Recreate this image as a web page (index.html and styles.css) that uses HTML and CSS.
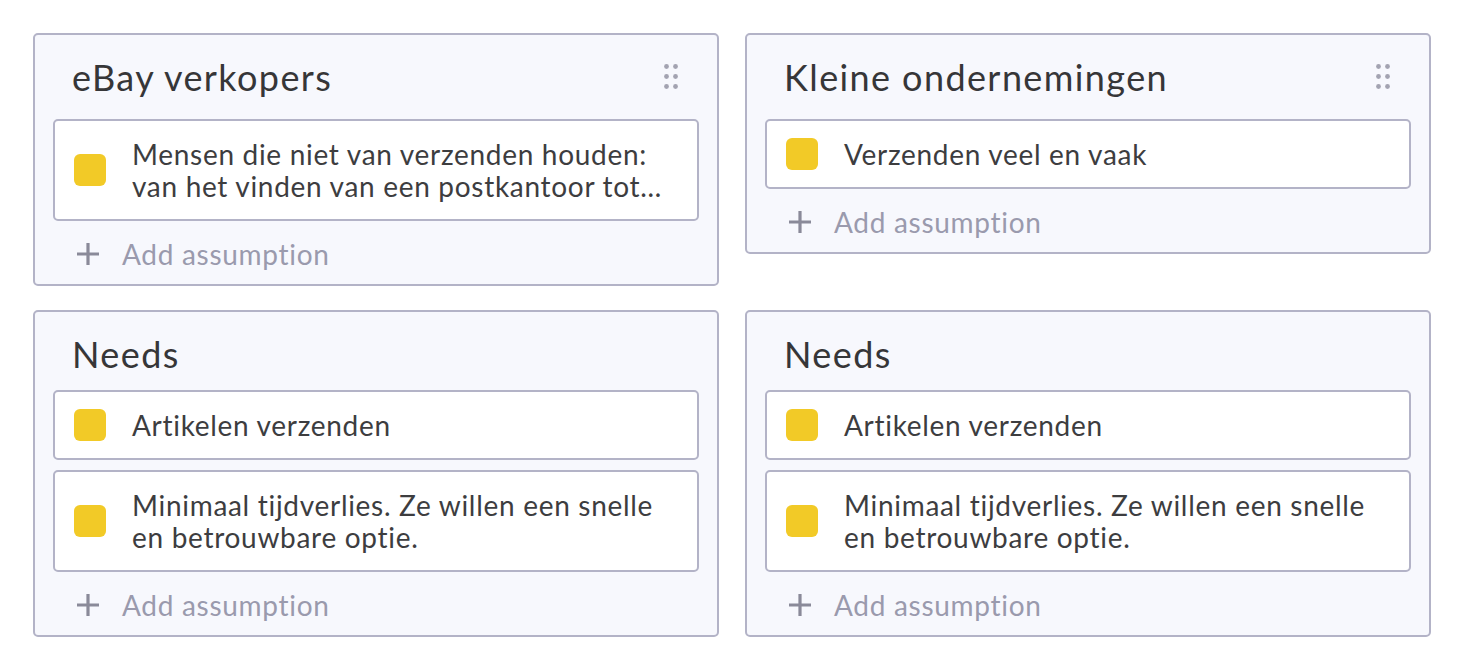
FILE: index.html
```html
<!DOCTYPE html>
<html lang="nl">
<head>
<meta charset="utf-8">
<title>Assumptions</title>
<link rel="stylesheet" href="styles.css">
</head>
<body>
<main class="board">
  <section class="card">
    <header class="card-head has-handle">
      <h2 class="card-title">eBay verkopers</h2>
      <span class="handle" aria-hidden="true">
        <svg width="15" height="25" viewBox="0 0 15 25"><g fill="#a3a3b1"><circle cx="2.5" cy="2.5" r="2.4"/><circle cx="11.5" cy="2.5" r="2.4"/><circle cx="2.5" cy="12.5" r="2.4"/><circle cx="11.5" cy="12.5" r="2.4"/><circle cx="2.5" cy="22.5" r="2.4"/><circle cx="11.5" cy="22.5" r="2.4"/></g></svg>
      </span>
    </header>
    <div class="items">
      <div class="item"><span class="swatch"></span><p class="item-text item-text--clamped">Mensen die niet van verzenden houden: van het vinden van een postkantoor tot…</p></div>
    </div>
    <button class="add"><svg class="plus" width="24" height="24" viewBox="0 0 24 24"><path d="M12 1V23M1 12H23" stroke="#8a8a99" stroke-width="3.2"/></svg><span>Add assumption</span></button>
  </section>

  <section class="card">
    <header class="card-head has-handle">
      <h2 class="card-title">Kleine ondernemingen</h2>
      <span class="handle" aria-hidden="true">
        <svg width="15" height="25" viewBox="0 0 15 25"><g fill="#a3a3b1"><circle cx="2.5" cy="2.5" r="2.4"/><circle cx="11.5" cy="2.5" r="2.4"/><circle cx="2.5" cy="12.5" r="2.4"/><circle cx="11.5" cy="12.5" r="2.4"/><circle cx="2.5" cy="22.5" r="2.4"/><circle cx="11.5" cy="22.5" r="2.4"/></g></svg>
      </span>
    </header>
    <div class="items">
      <div class="item"><span class="swatch"></span><p class="item-text">Verzenden veel en vaak</p></div>
    </div>
    <button class="add"><svg class="plus" width="24" height="24" viewBox="0 0 24 24"><path d="M12 1V23M1 12H23" stroke="#8a8a99" stroke-width="3.2"/></svg><span>Add assumption</span></button>
  </section>

  <section class="card">
    <header class="card-head">
      <h2 class="card-title">Needs</h2>
    </header>
    <div class="items">
      <div class="item"><span class="swatch"></span><p class="item-text">Artikelen verzenden</p></div>
      <div class="item"><span class="swatch"></span><p class="item-text">Minimaal tijdverlies. Ze willen een snelle en betrouwbare optie.</p></div>
    </div>
    <button class="add"><svg class="plus" width="24" height="24" viewBox="0 0 24 24"><path d="M12 1V23M1 12H23" stroke="#8a8a99" stroke-width="3.2"/></svg><span>Add assumption</span></button>
  </section>

  <section class="card">
    <header class="card-head">
      <h2 class="card-title">Needs</h2>
    </header>
    <div class="items">
      <div class="item"><span class="swatch"></span><p class="item-text">Artikelen verzenden</p></div>
      <div class="item"><span class="swatch"></span><p class="item-text">Minimaal tijdverlies. Ze willen een snelle en betrouwbare optie.</p></div>
    </div>
    <button class="add"><svg class="plus" width="24" height="24" viewBox="0 0 24 24"><path d="M12 1V23M1 12H23" stroke="#8a8a99" stroke-width="3.2"/></svg><span>Add assumption</span></button>
  </section>
</main>
</body>
</html>
```

FILE: styles.css
```css
* { box-sizing: border-box; }

html, body {
  margin: 0;
  background: #ffffff;
}

body {
  padding: 33px;
  font-family: Lato, "Open Sans", "Liberation Sans", sans-serif;
  color: #3d3d3f;
}

.board {
  display: grid;
  grid-template-columns: 1fr 1fr;
  column-gap: 26px;
  row-gap: 24px;
  align-items: start;
}

.card {
  background: #f7f8fd;
  border: 2px solid #b3b3c7;
  border-radius: 5px;
  padding: 22px 18px 10px;
  display: flex;
  flex-direction: column;
}

.card-head {
  display: flex;
  align-items: flex-start;
  justify-content: space-between;
  height: 40px;
  margin-bottom: 16px;
}

.card-head.has-handle {
  height: 46px;
}

.card-title {
  margin: 0;
  padding-left: 19px;
  font-size: 36px;
  line-height: 40px;
  font-weight: 400;
  letter-spacing: 1.4px;
  color: #363638;
}

.handle {
  display: flex;
  padding-top: 7px;
  margin-right: 20px;
}

.items {
  display: flex;
  flex-direction: column;
  gap: 10px;
}

.item {
  display: flex;
  align-items: center;
  gap: 26px;
  background: #ffffff;
  border: 2px solid #b3b3c7;
  border-radius: 5px;
  padding: 17px 18px 17px 19px;
}

.swatch {
  flex: 0 0 32px;
  width: 32px;
  height: 32px;
  border-radius: 6px;
  background: #f2ca27;
}

.item-text {
  margin: 0;
  flex: 1 1 auto;
  font-size: 28px;
  line-height: 32px;
  letter-spacing: 0.7px;
  color: #3d3d3f;
}

.item-text--clamped {
  display: -webkit-box;
  -webkit-box-orient: vertical;
  -webkit-line-clamp: 2;
  overflow: hidden;
}

.add {
  display: flex;
  align-items: center;
  gap: 22px;
  height: 40px;
  margin-top: 13px;
  padding: 0 0 0 23px;
  border: 0;
  background: transparent;
  font-family: inherit;
  font-size: 28px;
  letter-spacing: 0.7px;
  color: #9a9aad;
  text-align: left;
  cursor: pointer;
}

.plus { flex: 0 0 24px; }
```
